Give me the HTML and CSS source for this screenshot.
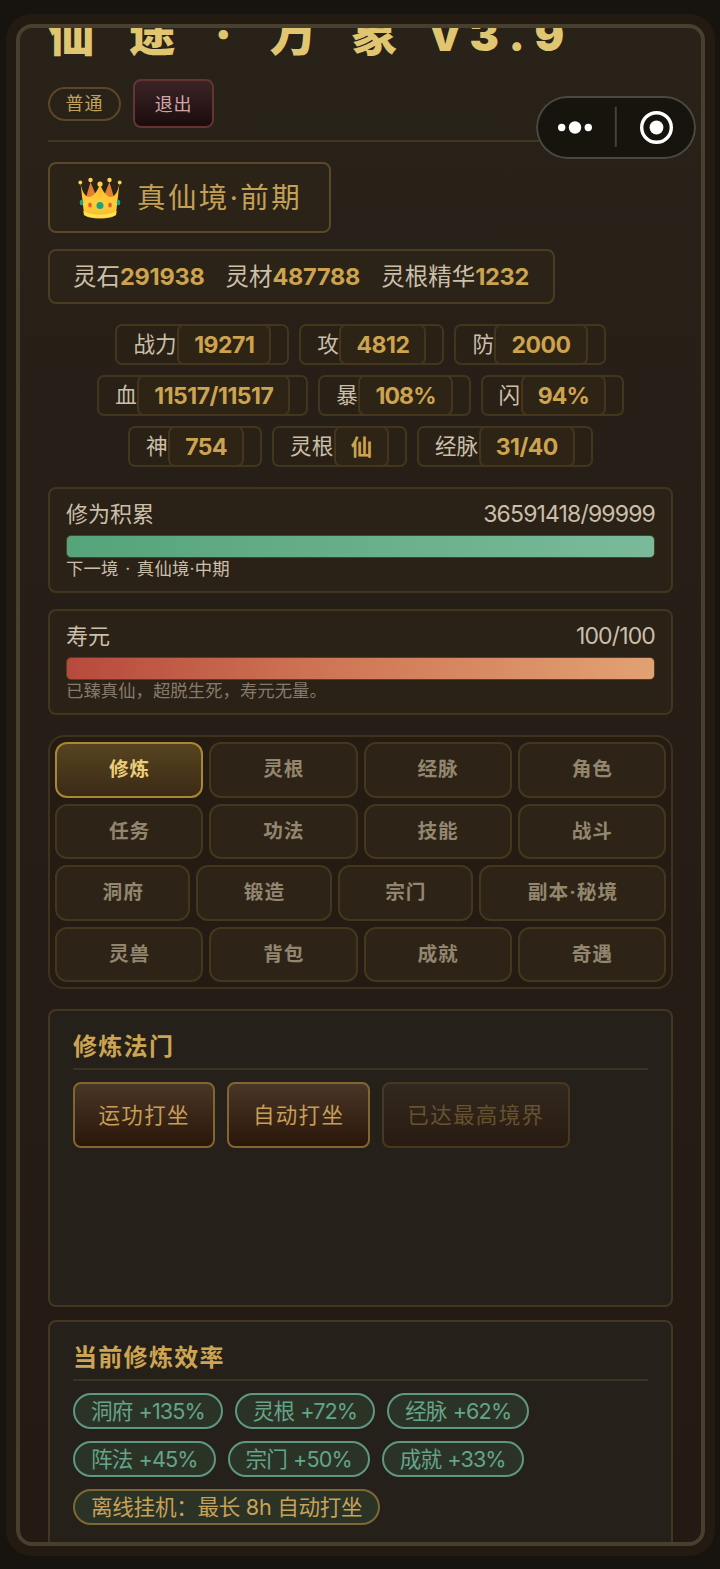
FILE: index.html
```html
<!DOCTYPE html>
<html lang="zh-CN">
<head>
<meta charset="utf-8">
<title>仙途·万象</title>
<link rel="stylesheet" href="styles.css">
</head>
<body>
<div class="frame">
  <header class="header">
    <h1 class="title">仙 途 <span class="dot">·</span> 万 象 <span class="version">v3.9</span></h1>
    <div class="account"><span class="mode">普通</span><button class="logout">退出</button></div>
  </header>

  <div class="realm">
    <svg class="crown" viewBox="0 0 44 42">
      <defs><linearGradient id="gold" x1="0" y1="0" x2="0" y2="1"><stop offset="0" stop-color="#ffb62e"/><stop offset=".6" stop-color="#ffcf3a"/><stop offset="1" stop-color="#f9b52c"/></linearGradient></defs>
      <path d="M7 24 12.500 5l7 17zM37 24 31.500 5l-7 17z" fill="#e3812f"/>
      <path d="M2.500 6c1.500 8 4 13 8 14 5 0 9-6 11.500-13 2.500 7 6.500 13 11.500 13 4-1 6.500-6 8-14l-3.500 31c-1 6-31 6-32 0z" fill="url(#gold)"/>
      <path d="M5.500 34c8 5 25 5 33 0l-.4 4c-8 4-24 4-32.200 0z" fill="#ffe24f"/>
      <g fill="#ffd04d"><circle cx="2.300" cy="5.500" r="1.900"/><circle cx="12.500" cy="3" r="2.200"/><circle cx="22" cy="7" r="2.600"/><circle cx="31.500" cy="3" r="2.200"/><circle cx="41.700" cy="5.500" r="1.900"/></g>
      <g fill="#1fa089"><ellipse cx="3.500" cy="25.500" rx="1.800" ry="2.700"/><circle cx="22" cy="28.500" r="3.500"/><ellipse cx="40.500" cy="25.500" rx="1.800" ry="2.700"/></g>
      <g fill="#e4602b"><ellipse cx="12" cy="28" rx="1.900" ry="2.500"/><ellipse cx="32" cy="28" rx="1.900" ry="2.500"/></g>
    </svg>
    <span>真仙境·前期</span>
  </div>

  <div class="wealth">
    <span>灵石<b>291938</b></span><span>灵材<b>487788</b></span><span>灵根精华<b>1232</b></span>
  </div>

  <div class="stats">
    <div class="stat-row">
      <div class="stat">战力<b>19271</b></div><div class="stat">攻<b>4812</b></div><div class="stat">防<b>2000</b></div>
    </div>
    <div class="stat-row">
      <div class="stat">血<b>11517/11517</b></div><div class="stat">暴<b class="pct">108%</b></div><div class="stat">闪<b class="pct">94%</b></div>
    </div>
    <div class="stat-row">
      <div class="stat">神<b>754</b></div><div class="stat">灵根<b class="han">仙</b></div><div class="stat">经脉<b>31/40</b></div>
    </div>
  </div>

  <section class="meter">
    <div class="meter-head"><span>修为积累</span><span class="num">36591418/99999</span></div>
    <div class="bar jade"></div>
    <div class="meter-note next">下一境 · 真仙境·中期</div>
  </section>
  <section class="meter">
    <div class="meter-head"><span>寿元</span><span class="num">100/100</span></div>
    <div class="bar ember"></div>
    <div class="meter-note dim">已臻真仙，超脱生死，寿元无量。</div>
  </section>

  <nav class="tabs">
    <div class="tab-row"><a class="tab active">修炼</a><a class="tab">灵根</a><a class="tab">经脉</a><a class="tab">角色</a></div>
    <div class="tab-row"><a class="tab">任务</a><a class="tab">功法</a><a class="tab">技能</a><a class="tab">战斗</a></div>
    <div class="tab-row"><a class="tab">洞府</a><a class="tab">锻造</a><a class="tab">宗门</a><a class="tab wide">副本·秘境</a></div>
    <div class="tab-row"><a class="tab">灵兽</a><a class="tab">背包</a><a class="tab">成就</a><a class="tab">奇遇</a></div>
  </nav>

  <section class="panel practice">
    <h2>修炼法门</h2>
    <div class="actions"><button class="action">运功打坐</button><button class="action">自动打坐</button><button class="action" disabled>已达最高境界</button></div>
  </section>

  <section class="panel rates">
    <h2>当前修炼效率</h2>
    <div class="tags">
      <div class="tag-row"><span class="tag">洞府 +135%</span><span class="tag">灵根 +72%</span><span class="tag">经脉 +62%</span></div>
      <div class="tag-row"><span class="tag">阵法 +45%</span><span class="tag">宗门 +50%</span><span class="tag">成就 +33%</span></div>
      <div class="tag-row"><span class="tag offline">离线挂机：最长 8h 自动打坐</span></div>
    </div>
  </section>
</div>

<div class="capsule">
  <svg viewBox="0 0 160 63" width="160" height="63">
    <g fill="#fff"><circle cx="25.700" cy="31.500" r="3.700"/><circle cx="39" cy="31.500" r="6.200"/><circle cx="52.300" cy="31.500" r="3.700"/><circle cx="120.500" cy="31.500" r="6.900"/></g>
    <circle cx="120.500" cy="31.500" r="14.800" fill="none" stroke="#fff" stroke-width="3.400"/>
    <path d="M79.800 11v40" stroke="#44413a" stroke-width="2"/>
  </svg>
</div>
</body>
</html>
```
FILE: styles.css
```css
* { box-sizing: border-box; }
body {
  margin: 0;
  height: 1569px;
  padding: 24px 15px 23px 16px;
  overflow: hidden;
  background: #17140f;
  font-family: Inter, "Noto Sans CJK SC", sans-serif;
  color: #cbbfa9;
}
button { font-family: inherit; }
.frame {
  height: 1522px;
  overflow: hidden;
  padding: 0 28px;
  border: 4px solid #48402e;
  border-radius: 16px;
  background: linear-gradient(#292219, #251d16 50%, #241a13);
  box-shadow: 0 0 0 10px #231b12;
  display: flex;
  flex-direction: column;
}
.frame > * { flex-shrink: 0; }

.header { border-bottom: 2px solid #43361f; height: 114px; }
.title {
  margin: -24px 0 0;
  height: 60px;
  line-height: 60px;
  font-size: 47px;
  font-weight: 900;
  letter-spacing: 12.200px;
  white-space: nowrap;
  color: #e0c671;
}
.dot { margin: 0 4px 0 5px; }
.version { font-size: 44px; letter-spacing: 10.400px; }
.account { display: flex; align-items: center; gap: 12px; height: 49px; margin-top: 15px; }
.mode {
  width: 73px;
  height: 34px;
  border: 2px solid #5a4725;
  border-radius: 17px;
  font-size: 18px;
  line-height: 29px;
  letter-spacing: 1px;
  text-align: center;
  color: #c4a15a;
}
.logout {
  width: 81px;
  height: 49px;
  padding: 0 0 2px;
  border: 2px solid #623531;
  border-radius: 8px;
  background: linear-gradient(#3b2326, #1c0c0e);
  font-size: 18px;
  letter-spacing: 0.800px;
  color: #d0a5a8;
}

.realm {
  margin-top: 20px;
  width: 283px;
  height: 71px;
  padding-left: 28px;
  border: 2px solid #5a4826;
  border-radius: 8px;
  background: #2b2317;
  display: flex;
  align-items: center;
  gap: 15px;
  font-size: 28.500px;
  line-height: 40px;
  letter-spacing: 2.400px;
  white-space: nowrap;
  color: #c4a056;
}
.crown { width: 44px; height: 42px; }

.wealth {
  margin-top: 16px;
  width: 507px;
  height: 55px;
  padding-left: 23px;
  border: 2px solid #4b3d20;
  border-radius: 8px;
  background: #2b2317;
  display: flex;
  gap: 21px;
  font-size: 23.500px;
  line-height: 51px;
  white-space: nowrap;
}
.wealth b, .stat b { color: #cda34f; letter-spacing: -0.500px; }
.wealth b { letter-spacing: -0.250px; }

.stats { margin-top: 20px; display: flex; flex-direction: column; gap: 10px; }
.stat-row { display: flex; justify-content: center; gap: 10px; }
.stat {
  display: flex;
  height: 41px;
  padding: 0 16px;
  border: 2px solid #42361c;
  border-radius: 7px;
  background: #292116;
  font-size: 21.600px;
  line-height: 37px;
}
.stat b {
  margin: -2px 0 -2px 0.500px;
  padding: 0 15px;
  border: 2px solid #43361d;
  border-radius: 7px;
  background: #2d2416;
  font-size: 23px;
  line-height: 38px;
}
.stat .pct { letter-spacing: -0.900px; }
.stat .han { font-size: 21.600px; }

.meter {
  margin-top: 16px;
  height: 106px;
  padding: 9px 16px 0;
  border: 2px solid #43361f;
  border-radius: 8px;
  background: #2a2117;
}
.stats + .meter { margin-top: 20px; }
.meter-head { display: flex; justify-content: space-between; height: 37px; line-height: 32px; font-size: 22px; }
.num { font-size: 23px; letter-spacing: -0.850px; }
.bar { height: 23px; border: 1px solid #51411f; border-radius: 5px; }
.jade { background: linear-gradient(90deg, #55a47a, #7aba9b); }
.ember { background: linear-gradient(90deg, #b74a3d, #cf7655 45%, #e2a172); }
.meter-note { font-size: 17.400px; line-height: 22px; white-space: nowrap; }
.next { letter-spacing: 0.150px; word-spacing: 1.500px; }
.dim { color: #867b6b; }

.tabs {
  margin-top: 20px;
  height: 254px;
  padding: 5px;
  border: 2px solid #3f321d;
  border-radius: 16px;
  background: #241c12;
  display: flex;
  flex-direction: column;
  gap: 6px;
}
.tab-row { flex: 1; display: flex; gap: 6px; }
.tab {
  flex: 1;
  border: 2px solid #44371e;
  border-radius: 12px;
  background: #2d2317;
  font-size: 19.700px;
  font-weight: 700;
  letter-spacing: 1px;
  line-height: 51px;
  text-indent: 1px;
  text-align: center;
  color: #93866f;
}
.tab.wide { flex: 0 0 187px; }
.tab.active { border-color: #a98735; background: linear-gradient(#564320, #3b2b16); color: #ebcf78; }

.panel {
  margin-top: 20px;
  padding: 17px 23px 0;
  border: 2px solid #43371f;
  border-radius: 8px;
  background: #26201a;
}
.practice { height: 298px; }
.rates { margin-top: 13px; height: 270px; }
.panel h2 {
  margin: 0 0 12px;
  height: 42px;
  border-bottom: 2px solid #3c3220;
  font-size: 24px;
  line-height: 37px;
  letter-spacing: 1.300px;
  color: #cda552;
}
.actions { display: flex; gap: 12px; }
.action {
  height: 66px;
  padding: 0 23.500px 3px;
  border: 2px solid #82652f;
  border-radius: 8px;
  background: linear-gradient(#483627, #2b1709);
  font-size: 21.500px;
  letter-spacing: 1.350px;
  white-space: nowrap;
  color: #c69e54;
}
.action:disabled { border-color: #463920; background: linear-gradient(#32281f, #291b11); color: #66522f; }

.tags { display: flex; flex-direction: column; gap: 12px; }
.tag-row { display: flex; gap: 12px; }
.tag {
  height: 36px;
  padding: 0 16px;
  border: 2px solid #609780;
  border-radius: 18px;
  background: #2b3327;
  font-size: 21.600px;
  line-height: 32px;
  letter-spacing: -0.900px;
  word-spacing: 1px;
  white-space: nowrap;
  color: #65a487;
}
.offline { border-color: #7d6833; color: #c7a257; letter-spacing: -0.300px; word-spacing: 0; }

.capsule {
  position: absolute;
  left: 536px;
  top: 96px;
  width: 160px;
  height: 63px;
  border-radius: 32px;
  background: #17130d;
  box-shadow: inset 0 0 0 2px #4b4840;
}
.capsule svg { display: block; }
```
